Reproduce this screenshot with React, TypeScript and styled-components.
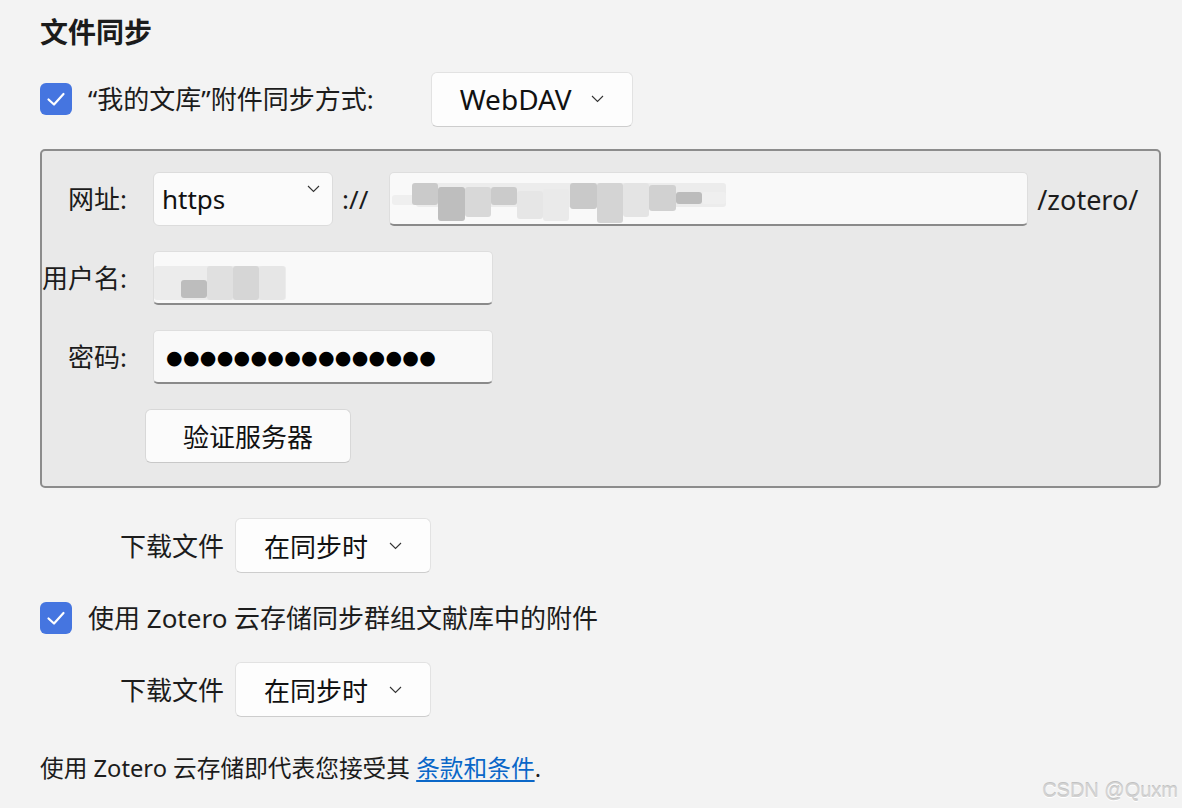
import React from "react";
import styled, { createGlobalStyle } from "styled-components";

const GlobalStyle = createGlobalStyle`
  html, body {
    margin: 0;
    padding: 0;
    background: #f3f3f3;
  }

  body {
    font-family: "Noto Sans", "Noto Sans CJK SC", sans-serif;
    color: #1c1c1c;
  }
`;

const Page = styled.div`
  position: relative;
  width: 1182px;
  height: 808px;
  padding-left: 40px;
  box-sizing: border-box;
  overflow: hidden;
`;

const Heading = styled.h2`
  margin: 14px 0 0;
  height: 36px;
  font-size: 28px;
  line-height: 36px;
  font-weight: 700;
  color: #1b1b1b;
`;

type RowProps = {
  top: number;
  height: number;
  indent?: number;
};

const Row = styled.div<RowProps>`
  display: flex;
  align-items: center;
  margin-top: ${({ top }) => top}px;
  height: ${({ height }) => height}px;
  padding-left: ${({ indent }) => indent || 0}px;
`;

const Label = styled.span<{ gap?: number }>`
  font-size: 26px;
  line-height: 32px;
  margin-left: ${({ gap }) => gap || 0}px;
  white-space: nowrap;
  color: #1c1c1c;
`;

const CheckboxBox = styled.span`
  display: flex;
  align-items: center;
  justify-content: center;
  width: 32px;
  height: 32px;
  border-radius: 6px;
  background: #4575e0;
  flex-shrink: 0;
`;

const Checkbox = () => (
  <CheckboxBox>
    <svg width="22" height="22" viewBox="0 0 22 22">
      <path d="M3.5 11.5 L9 16.5 L18.5 6" fill="none" stroke="#fff" strokeWidth="2.2" strokeLinecap="round" strokeLinejoin="round" />
    </svg>
  </CheckboxBox>
);

type MenuProps = {
  width: number;
  gap?: number;
  size?: number;
};

const MenuButton = styled.div<MenuProps>`
  display: flex;
  align-items: center;
  box-sizing: border-box;
  width: ${({ width }) => width}px;
  height: 55px;
  margin-left: ${({ gap }) => gap || 0}px;
  padding: 0 28px;
  background: #fdfdfd;
  border: 1px solid #e2e2e2;
  border-bottom-color: #cdcdcd;
  border-radius: 6px;
  font-size: ${({ size }) => size || 26}px;
  color: #111;
`;

const MenuText = styled.span`
  flex: 1;
  white-space: nowrap;
`;

const Chevron = () => (
  <svg width="13" height="8" viewBox="0 0 13 8">
    <path d="M1 1 L6.5 6.5 L12 1" fill="none" stroke="#333" strokeWidth="1.1" />
  </svg>
);

const GroupBox = styled.div`
  margin-top: 23px;
  width: 1121px;
  height: 339px;
  box-sizing: border-box;
  padding: 21px 0 0 0;
  background: #e9e9e9;
  border: 2px solid #8c8c8c;
  border-radius: 5px;
  display: grid;
  grid-template-columns: 85px 1fr;
  column-gap: 26px;
  grid-auto-rows: 54px;
  row-gap: 25px;
`;

const FieldLabel = styled.span`
  justify-self: end;
  align-self: center;
  font-size: 26px;
  line-height: 32px;
  white-space: nowrap;
  color: #1c1c1c;
`;

const FieldLine = styled.div`
  display: flex;
  align-items: center;
`;

const Select = styled.div`
  display: flex;
  box-sizing: border-box;
  width: 180px;
  height: 54px;
  padding: 0 12px 0 8px;
  background: #fbfbfb;
  border: 1px solid #dcdcdc;
  border-radius: 6px;
  font-size: 26px;
  color: #111;
`;

const SelectText = styled.span`
  flex: 1;
  align-self: center;
`;

const SelectChevron = styled.span`
  display: flex;
  align-items: flex-start;
  padding-top: 12px;
  line-height: 0;
`;

const Sep = styled.span<{ left: number; right: number; size?: number }>`
  font-size: ${({ size }) => size || 26}px;
  margin: 0 ${({ right }) => right}px 0 ${({ left }) => left}px;
  color: #1c1c1c;
`;

const TextInput = styled.div<{ width: number }>`
  position: relative;
  box-sizing: border-box;
  width: ${({ width }) => width}px;
  height: 54px;
  background: #f9f9f9;
  border: 1px solid #dedede;
  border-bottom: 2px solid #8a8a8a;
  border-radius: 5px;
  display: flex;
  align-items: center;
  padding-left: 12px;
  overflow: hidden;
`;

const Dots = styled.span`
  font-family: "DejaVu Sans", sans-serif;
  font-size: 19px;
  letter-spacing: 0.3px;
  color: #000;
`;

const Mosaic = styled.svg`
  position: absolute;
  left: 0;
  top: 0;
`;

type Block = [number, number, number, number, string];

const urlBlocks: Block[] = [
  [26, 10, 310, 24, "#ececec"],
  [2, 22, 36, 10, "#efefef"],
  [22, 10, 26, 22, "#cacaca"],
  [48, 14, 27, 34, "#bebebe"],
  [75, 14, 26, 30, "#d8d8d8"],
  [101, 14, 26, 18, "#cbcbcb"],
  [127, 18, 26, 28, "#e6e6e6"],
  [153, 16, 26, 32, "#eaeaea"],
  [180, 10, 27, 26, "#c9c9c9"],
  [207, 10, 26, 40, "#d4d4d4"],
  [233, 10, 26, 34, "#e4e4e4"],
  [259, 12, 27, 26, "#d1d1d1"],
  [286, 19, 26, 12, "#bcbcbc"],
  [312, 19, 24, 12, "#efefef"],
];

const userBlocks: Block[] = [
  [0, 14, 132, 34, "#ececec"],
  [27, 28, 26, 18, "#bdbdbd"],
  [53, 14, 26, 34, "#e0e0e0"],
  [79, 14, 26, 34, "#d6d6d6"],
  [105, 14, 26, 34, "#e6e6e6"],
];

const MosaicBlocks = ({ blocks, width }: { blocks: Block[]; width: number }) => (
  <Mosaic width={width} height="54" viewBox={`0 0 ${width} 54`}>
    {blocks.map(([x, y, w, h, c], i) => (
      <rect key={i} x={x} y={y} width={w} height={h} rx="3" fill={c} />
    ))}
  </Mosaic>
);

const VerifyButton = styled.div`
  margin-left: -8px;
  width: 206px;
  height: 54px;
  box-sizing: border-box;
  display: flex;
  align-items: center;
  justify-content: center;
  background: #fbfbfb;
  border: 1px solid #d8d8d8;
  border-bottom-color: #c8c8c8;
  border-radius: 6px;
  font-size: 26px;
  color: #111;
`;

const Footer = styled.p`
  margin: 36px 0 0;
  font-size: 23.7px;
  line-height: 30px;
  color: #1c1c1c;
`;

const Link = styled.a`
  color: #0a67c8;
  text-decoration: underline;
  text-underline-offset: 3px;
`;

const Watermark = styled.span`
  position: absolute;
  right: 4px;
  bottom: 6px;
  font-family: "Liberation Sans", sans-serif;
  font-size: 20px;
  color: #d2d2d2;
  text-shadow: 0 1px 0 #ffffff, 0 -1px 0 #c2c2c2;
`;

const DownloadRow = ({ top }: { top: number }) => (
  <Row top={top} height={55} indent={80}>
    <Label>下载文件</Label>
    <MenuButton width={196} gap={11}>
      <MenuText>在同步时</MenuText>
      <Chevron />
    </MenuButton>
  </Row>
);

export default function App(): JSX.Element {
  return (
    <Page>
      <GlobalStyle />
      <Heading>文件同步</Heading>

      <Row top={22} height={54}>
        <Checkbox />
        <Label gap={16}>“我的文库”附件同步方式:</Label>
        <MenuButton width={202} gap={57} size={28}>
          <MenuText>WebDAV</MenuText>
          <Chevron />
        </MenuButton>
      </Row>

      <GroupBox>
        <FieldLabel>网址:</FieldLabel>
        <FieldLine>
          <Select>
            <SelectText>https</SelectText>
            <SelectChevron>
              <Chevron />
            </SelectChevron>
          </Select>
          <Sep left={9} right={21}>://</Sep>
          <TextInput width={639}>
            <MosaicBlocks blocks={urlBlocks} width={639} />
          </TextInput>
          <Sep left={9} right={0} size={27}>/zotero/</Sep>
        </FieldLine>

        <FieldLabel>用户名:</FieldLabel>
        <FieldLine>
          <TextInput width={340}>
            <MosaicBlocks blocks={userBlocks} width={340} />
          </TextInput>
        </FieldLine>

        <FieldLabel>密码:</FieldLabel>
        <FieldLine>
          <TextInput width={340}>
            <Dots>●●●●●●●●●●●●●●●●</Dots>
          </TextInput>
        </FieldLine>

        <span />
        <FieldLine>
          <VerifyButton>验证服务器</VerifyButton>
        </FieldLine>
      </GroupBox>

      <DownloadRow top={30} />

      <Row top={29} height={32}>
        <Checkbox />
        <Label gap={16}>使用 Zotero 云存储同步群组文献库中的附件</Label>
      </Row>

      <DownloadRow top={28} />

      <Footer>
        使用 Zotero 云存储即代表您接受其 <Link href="#">条款和条件</Link>.
      </Footer>

      <Watermark>CSDN @Quxm</Watermark>
    </Page>
  );
}
